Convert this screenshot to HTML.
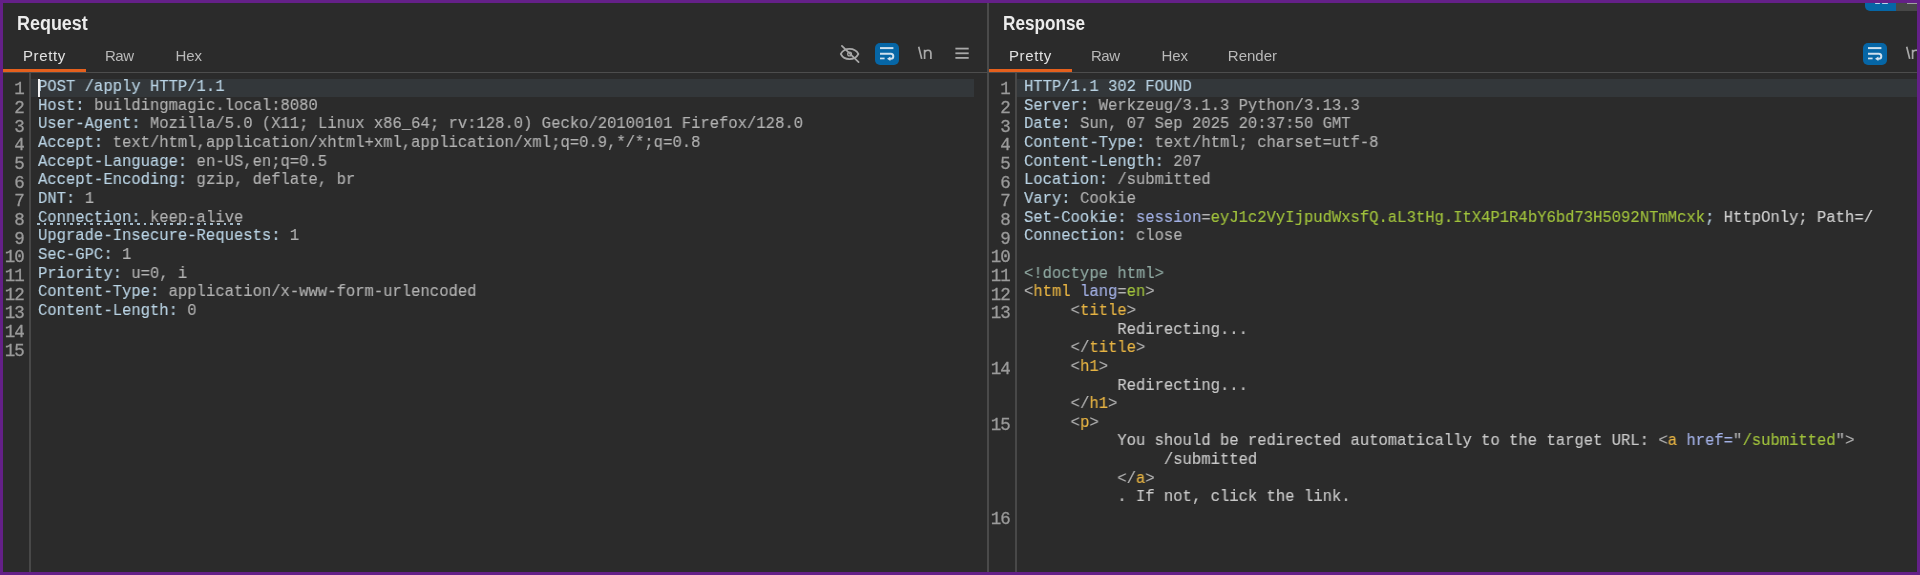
<!DOCTYPE html>
<html><head><meta charset="utf-8"><title>Burp</title>
<style>
html,body{margin:0;padding:0;}
body{width:1920px;height:575px;background:#642088;position:relative;overflow:hidden;}
.panel{position:absolute;top:3px;height:569px;background:#2b2b2b;overflow:hidden;will-change:transform;}
#req{left:3px;width:984px;}
#resp{left:989px;width:928px;}
#divider{position:absolute;left:987px;top:3px;width:2px;height:569px;background:#4a4a4a;}
.title{position:absolute;left:13.7px;top:9px;font:bold 19.5px/22px "Liberation Sans",sans-serif;color:#ececec;white-space:nowrap;transform-origin:0 0;}
.tab{position:absolute;top:43px;font:15px/20px "Liberation Sans",sans-serif;color:#b9b9b9;white-space:nowrap;}
.tab.on{color:#e2e2e2;}
.uline{position:absolute;left:0;top:66px;width:82.5px;height:3px;background:#e5601d;}
.hline{position:absolute;left:0;top:69px;width:100%;height:1px;background:#4d4d4d;}
.gsep{position:absolute;left:26px;top:70px;width:2px;height:500px;background:#484848;}
.hl{position:absolute;left:28px;top:75.8px;height:18.7px;background:#33373a;}
.code{position:absolute;left:34.6px;top:75.1px;font:16.3px/18.6667px "Liberation Mono",monospace;color:#bcbcbc;white-space:normal;transform:scaleX(0.9548);transform-origin:0 0;will-change:transform;-webkit-text-stroke:0.15px currentColor;}
.r{height:18.6667px;white-space:pre;}
.nums{position:absolute;left:0;top:77.2px;width:20.6px;}
.n{position:absolute;right:0;font:17.5px/18.6667px "Liberation Mono",monospace;color:#9a9a9a;text-align:right;letter-spacing:-1.1px;-webkit-text-stroke:0.3px currentColor;}
.hn{color:#b9d3e4;}
.hv{color:#b2b2b2;}
.hw{color:#d0d0d0;}
.an{color:#a3b1e6;}
.av{color:#a0c23c;}
.tg{color:#e6b343;}
.br{color:#b3b3b3;}
.dt{color:#8fa9a2;}
.tx{color:#c9c9c9;}
.dots{position:absolute;left:34.2px;top:219.8px;width:203.5px;height:2.7px;background:repeating-linear-gradient(90deg,#a4bccc 0,#a4bccc 2.7px,transparent 2.7px,transparent 6.667px);}
.cursor{position:absolute;left:34.5px;top:75.8px;width:2.5px;height:18.5px;background:#f2f2f2;}
.icon{position:absolute;}

</style></head>
<body>
<div id="req" class="panel">
  <div class="title" style="transform:scaleX(0.92)">Request</div>
  <div class="tab on" style="left:20px;letter-spacing:0.6px">Pretty</div>
  <div class="tab" style="left:102px;letter-spacing:-0.5px">Raw</div>
  <div class="tab" style="left:172.4px">Hex</div>
  <div class="uline"></div>
  <div class="hline"></div>
  <!-- toolbar -->
  <svg class="icon" style="left:836px;top:38px" width="24" height="24" viewBox="0 0 24 24">
    <path d="M1.8 13 C5.2 6.2 15.8 6.2 19.4 13 C15.8 19.8 5.2 19.8 1.8 13 Z" fill="none" stroke="#a9a9a9" stroke-width="1.7"/>
    <circle cx="10.6" cy="13" r="1.9" fill="none" stroke="#a9a9a9" stroke-width="1.3"/>
    <line x1="2.9" y1="4.8" x2="19.6" y2="21.2" stroke="#a9a9a9" stroke-width="1.7" stroke-linecap="round"/>
  </svg>
  <div class="icon" style="left:872.4px;top:39.7px;width:24px;height:22.5px;border-radius:5px;background:#0666a6;"></div>
  <svg class="icon" style="left:872.4px;top:39.7px" width="24" height="23" viewBox="0 0 24 23">
    <rect x="5" y="4.1" width="13.4" height="2" fill="#cfe0ee"/>
    <path d="M5 10.8 H15.8 A2.5 2.5 0 0 1 15.8 15.8 H14.5" fill="none" stroke="#cfe0ee" stroke-width="2"/>
    <rect x="5" y="14.6" width="4.6" height="1.7" fill="#cfe0ee"/>
    <path d="M12 15.8 L15.4 13.6 L15.4 18 Z" fill="#cfe0ee"/>
  </svg>
  <svg class="icon" style="left:914px;top:42px" width="18" height="16" viewBox="0 0 18 16">
    <path d="M1.7 1.8 L4.7 13.9" stroke="#a9a9a9" stroke-width="1.7" fill="none"/>
    <path d="M7.6 13.9 V4.8 M7.6 7.4 C8.6 4.6 13.9 4.2 13.9 8.2 V13.9" stroke="#a9a9a9" stroke-width="1.7" fill="none"/>
  </svg>
  <svg class="icon" style="left:952px;top:44px" width="16" height="14" viewBox="0 0 16 14">
    <rect x="0.4" y="0.7" width="13.3" height="1.8" fill="#a9a9a9"/>
    <rect x="0.4" y="5.4" width="13.3" height="1.8" fill="#a9a9a9"/>
    <rect x="0.4" y="10" width="13.3" height="1.8" fill="#a9a9a9"/>
  </svg>
  <div class="gsep"></div>
  <div class="hl" style="width:942.9px"></div>
  <div class="nums">
<div class="n" style="top:0.000px">1</div>
<div class="n" style="top:18.667px">2</div>
<div class="n" style="top:37.333px">3</div>
<div class="n" style="top:56.000px">4</div>
<div class="n" style="top:74.667px">5</div>
<div class="n" style="top:93.333px">6</div>
<div class="n" style="top:112.000px">7</div>
<div class="n" style="top:130.667px">8</div>
<div class="n" style="top:149.334px">9</div>
<div class="n" style="top:168.000px">10</div>
<div class="n" style="top:186.667px">11</div>
<div class="n" style="top:205.334px">12</div>
<div class="n" style="top:224.000px">13</div>
<div class="n" style="top:242.667px">14</div>
<div class="n" style="top:261.334px">15</div>
  </div>
  <div class="code">
<div class="r"><span class="hn">POST /apply HTTP/1.1</span></div>
<div class="r"><span class="hn">Host:</span> <span class="hv">buildingmagic.local:8080</span></div>
<div class="r"><span class="hn">User-Agent:</span> <span class="hv">Mozilla/5.0 (X11; Linux x86_64; rv:128.0) Gecko/20100101 Firefox/128.0</span></div>
<div class="r"><span class="hn">Accept:</span> <span class="hv">text/html,application/xhtml+xml,application/xml;q=0.9,*/*;q=0.8</span></div>
<div class="r"><span class="hn">Accept-Language:</span> <span class="hv">en-US,en;q=0.5</span></div>
<div class="r"><span class="hn">Accept-Encoding:</span> <span class="hv">gzip, deflate, br</span></div>
<div class="r"><span class="hn">DNT:</span> <span class="hv">1</span></div>
<div class="r"><span class="hn">Connection:</span> <span class="hv">keep-alive</span></div>
<div class="r"><span class="hn">Upgrade-Insecure-Requests:</span> <span class="hv">1</span></div>
<div class="r"><span class="hn">Sec-GPC:</span> <span class="hv">1</span></div>
<div class="r"><span class="hn">Priority:</span> <span class="hv">u=0, i</span></div>
<div class="r"><span class="hn">Content-Type:</span> <span class="hv">application/x-www-form-urlencoded</span></div>
<div class="r"><span class="hn">Content-Length:</span> <span class="hv">0</span></div>
<div class="r"></div>
<div class="r"></div>
  </div>
  <div class="cursor"></div>
  <div class="dots"></div>
</div>
<div id="divider"></div>
<div id="resp" class="panel">
  <div class="title" style="transform:scaleX(0.88)">Response</div>
  <div class="tab on" style="left:20px;letter-spacing:0.6px">Pretty</div>
  <div class="tab" style="left:102px;letter-spacing:-0.5px">Raw</div>
  <div class="tab" style="left:172.4px">Hex</div>
  <div class="tab" style="left:238.8px">Render</div>
  <div class="uline"></div>
  <div class="hline"></div>
  <div class="icon" style="left:876.3px;top:-3px;width:31px;height:11px;border-radius:0 0 0 5px;background:#0666a6;"></div>
  <div class="icon" style="left:885.5px;top:0px;width:5.5px;height:1.3px;border-radius:1px;background:#b8d4ea;"></div>
  <div class="icon" style="left:893.3px;top:0px;width:5.4px;height:1.3px;border-radius:1px;background:#b8d4ea;"></div>
  <div class="icon" style="left:907.3px;top:0px;width:21px;height:8px;background:#474747;"></div>
  <div class="icon" style="left:917.7px;top:0px;width:10.3px;height:1px;background:#a0a0a0;"></div>
  <div class="icon" style="left:874px;top:39.8px;width:23.6px;height:22.3px;border-radius:5px;background:#0666a6;"></div>
  <svg class="icon" style="left:874px;top:39.8px" width="24" height="23" viewBox="0 0 24 23">
    <rect x="5" y="4.1" width="13.4" height="2" fill="#cfe0ee"/>
    <path d="M5 10.8 H15.8 A2.5 2.5 0 0 1 15.8 15.8 H14.5" fill="none" stroke="#cfe0ee" stroke-width="2"/>
    <rect x="5" y="14.6" width="4.6" height="1.7" fill="#cfe0ee"/>
    <path d="M12 15.8 L15.4 13.6 L15.4 18 Z" fill="#cfe0ee"/>
  </svg>
  <svg class="icon" style="left:915.5px;top:42px" width="18" height="16" viewBox="0 0 18 16">
    <path d="M1.7 1.8 L4.7 13.9" stroke="#a9a9a9" stroke-width="1.7" fill="none"/>
    <path d="M7.6 13.9 V4.8 M7.6 7.4 C8.6 4.6 13.9 4.2 13.9 8.2 V13.9" stroke="#a9a9a9" stroke-width="1.7" fill="none"/>
  </svg>
  <div class="gsep"></div>
  <div class="hl" style="width:900px"></div>
  <div class="nums">
<div class="n" style="top:0.000px">1</div>
<div class="n" style="top:18.667px">2</div>
<div class="n" style="top:37.333px">3</div>
<div class="n" style="top:56.000px">4</div>
<div class="n" style="top:74.667px">5</div>
<div class="n" style="top:93.333px">6</div>
<div class="n" style="top:112.000px">7</div>
<div class="n" style="top:130.667px">8</div>
<div class="n" style="top:149.334px">9</div>
<div class="n" style="top:168.000px">10</div>
<div class="n" style="top:186.667px">11</div>
<div class="n" style="top:205.334px">12</div>
<div class="n" style="top:224.000px">13</div>
<div class="n" style="top:280.000px">14</div>
<div class="n" style="top:336.001px">15</div>
<div class="n" style="top:429.334px">16</div>
  </div>
  <div class="code">
<div class="r"><span class="hn">HTTP/1.1 302 FOUND</span></div>
<div class="r"><span class="hn">Server:</span> <span class="hv">Werkzeug/3.1.3 Python/3.13.3</span></div>
<div class="r"><span class="hn">Date:</span> <span class="hv">Sun, 07 Sep 2025 20:37:50 GMT</span></div>
<div class="r"><span class="hn">Content-Type:</span> <span class="hv">text/html; charset=utf-8</span></div>
<div class="r"><span class="hn">Content-Length:</span> <span class="hv">207</span></div>
<div class="r"><span class="hn">Location:</span> <span class="hv">/submitted</span></div>
<div class="r"><span class="hn">Vary:</span> <span class="hv">Cookie</span></div>
<div class="r"><span class="hn">Set-Cookie:</span> <span class="an">session</span><span class="hv">=</span><span class="av">eyJ1c2VyIjpudWxsfQ.aL3tHg.ItX4P1R4bY6bd73H5092NTmMcxk</span><span class="hn">;</span> <span class="hw">HttpOnly; Path=/</span></div>
<div class="r"><span class="hn">Connection:</span> <span class="hv">close</span></div>
<div class="r"></div>
<div class="r"><span class="dt">&lt;!doctype html&gt;</span></div>
<div class="r"><span class="br">&lt;</span><span class="tg">html</span> <span class="an">lang</span><span class="br">=</span><span class="av">en</span><span class="br">&gt;</span></div>
<div class="r">     <span class="br">&lt;</span><span class="tg">title</span><span class="br">&gt;</span></div>
<div class="r">          <span class="tx">Redirecting...</span></div>
<div class="r">     <span class="br">&lt;/</span><span class="tg">title</span><span class="br">&gt;</span></div>
<div class="r">     <span class="br">&lt;</span><span class="tg">h1</span><span class="br">&gt;</span></div>
<div class="r">          <span class="tx">Redirecting...</span></div>
<div class="r">     <span class="br">&lt;/</span><span class="tg">h1</span><span class="br">&gt;</span></div>
<div class="r">     <span class="br">&lt;</span><span class="tg">p</span><span class="br">&gt;</span></div>
<div class="r">          <span class="tx">You should be redirected automatically to the target URL: </span><span class="br">&lt;</span><span class="tg">a</span> <span class="an">href=</span><span class="br">"</span><span class="av">/submitted</span><span class="br">"</span><span class="br">&gt;</span></div>
<div class="r">               <span class="tx">/submitted</span></div>
<div class="r">          <span class="br">&lt;/</span><span class="tg">a</span><span class="br">&gt;</span></div>
<div class="r">          <span class="tx">. If not, click the link.</span></div>
<div class="r"></div>
  </div>
</div>

</body></html>
